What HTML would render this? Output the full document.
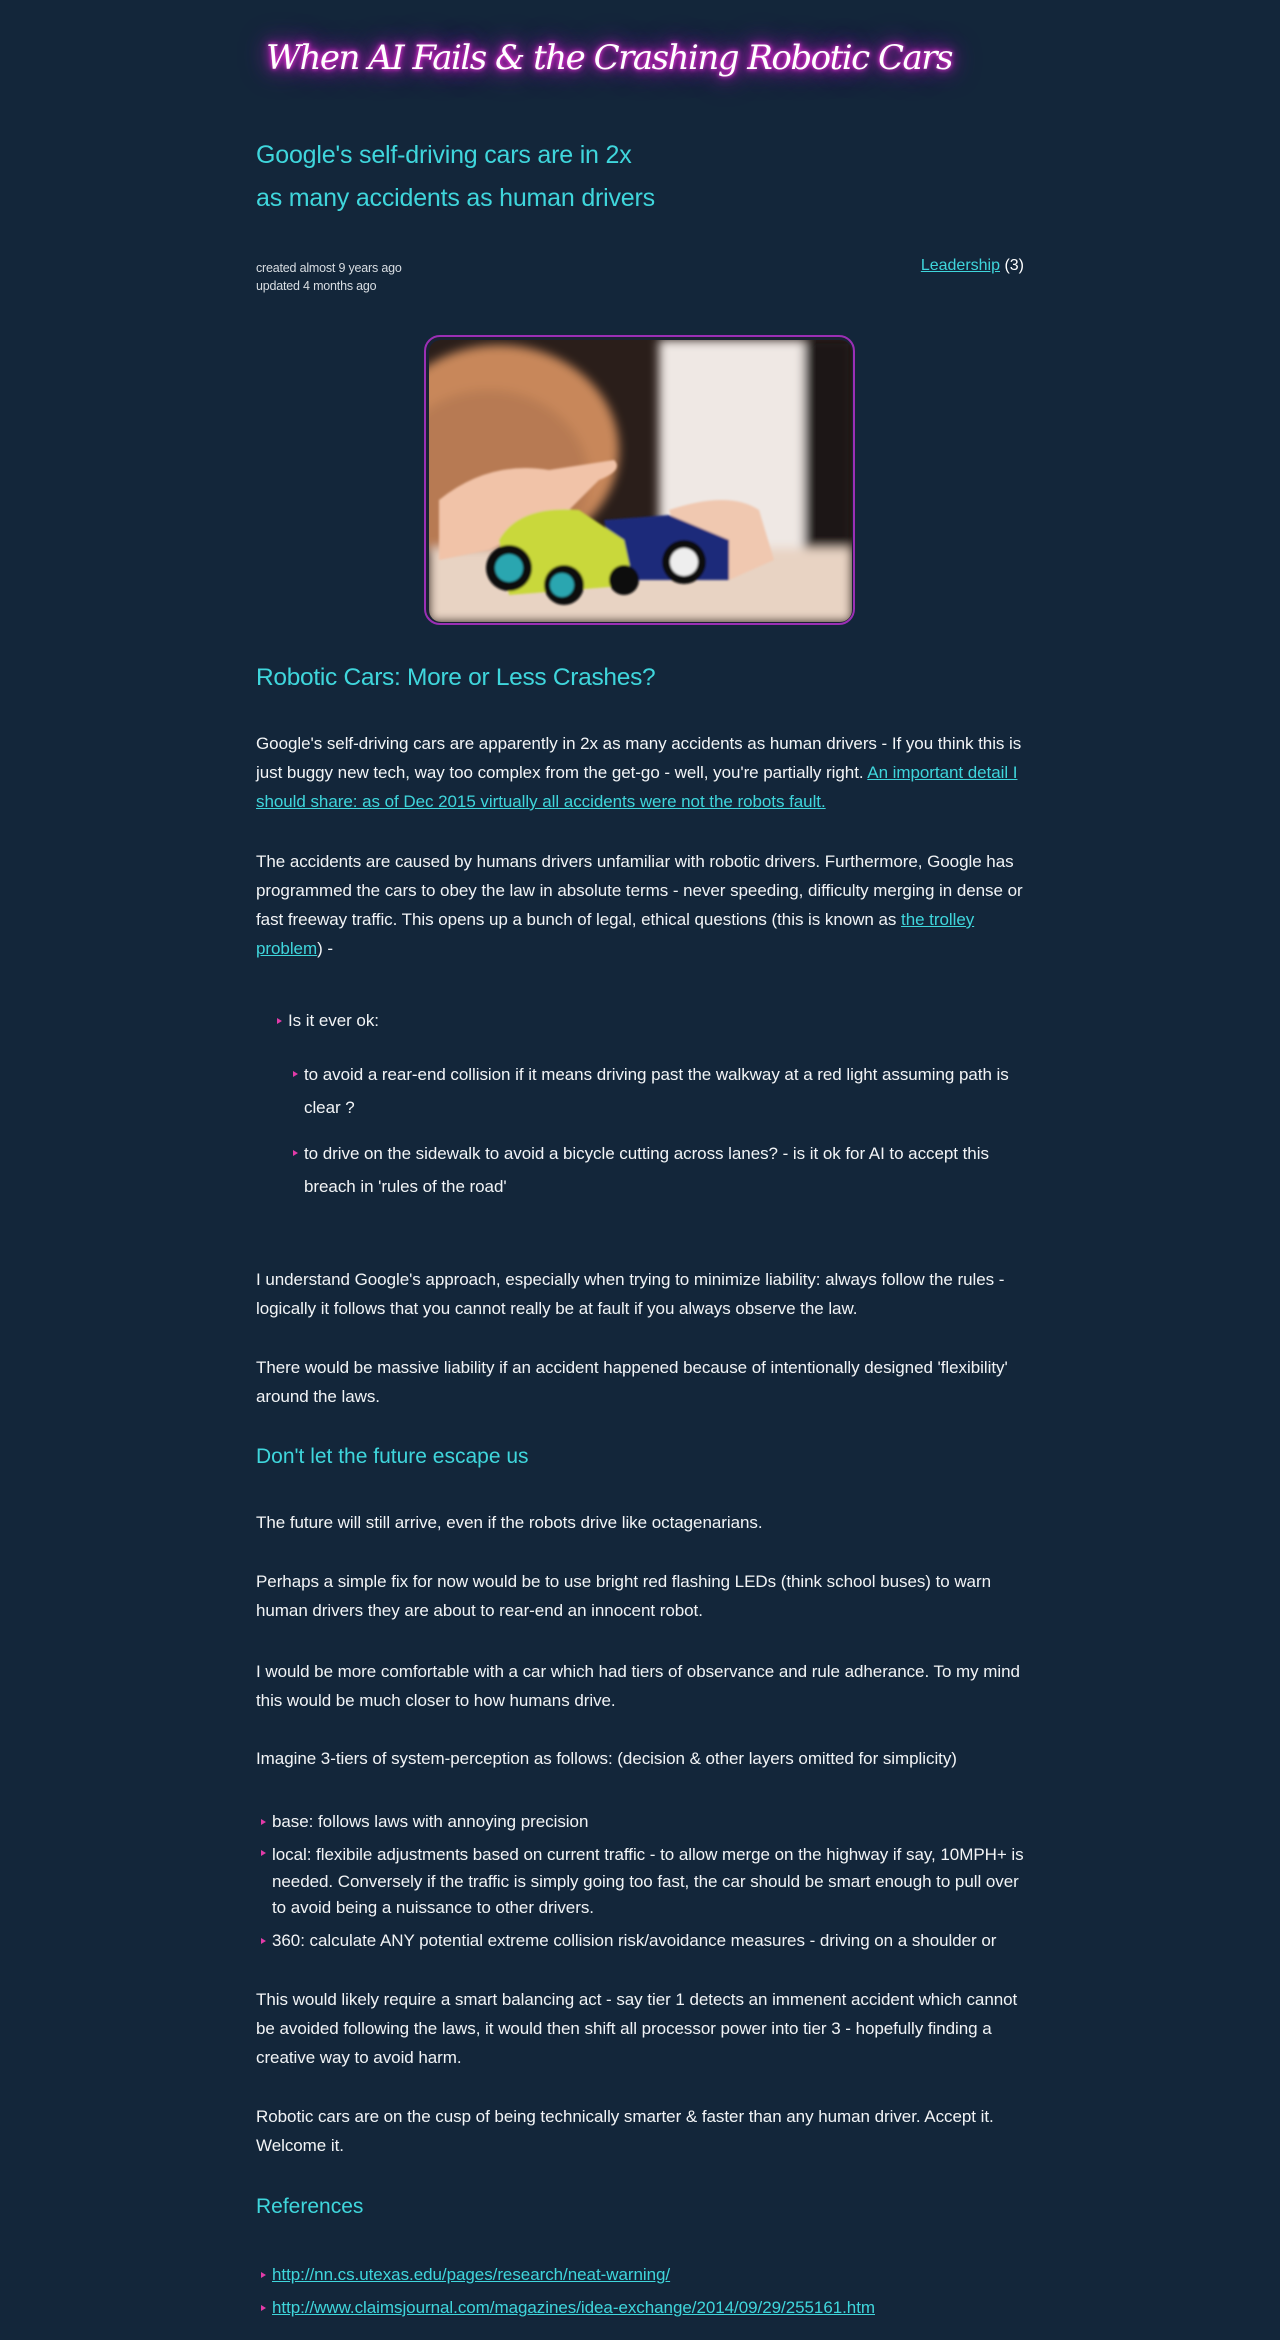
<!DOCTYPE html>
<html><head><meta charset="utf-8"><style>
*{margin:0;padding:0;box-sizing:border-box}
html,body{width:1280px;height:2340px;background:#13263a;overflow:hidden}
body{position:relative;font-family:"Liberation Sans",sans-serif;color:#f2f4f6}
.a{position:absolute;left:256px;width:768px}
p.a{font-size:17px;line-height:29px;letter-spacing:-0.05px}
a{color:#3fd6dc;text-decoration:underline}
.cy{color:#3fd6dc}
.b{position:absolute;font-size:17px;letter-spacing:-0.05px;line-height:22px}
.b:before{content:"";position:absolute;left:-11px;top:8px;border-left:5px solid #e23ba8;border-top:3px solid transparent;border-bottom:3px solid transparent}
.b.t:before{top:13px}
</style></head><body>
<div style="position:absolute;left:266px;top:38px;width:720px;font-family:'DejaVu Serif',serif;font-style:italic;font-size:34px;color:#fff;text-shadow:0 0 4px #ff3ce6,0 0 10px #e11fd0,0 0 20px #b418c0,0 0 30px #8a1aa0;white-space:nowrap;letter-spacing:-1.5px">When AI Fails &amp; the Crashing Robotic Cars</div>
<div class="a cy" style="top:134px;font-size:25px;line-height:43px;letter-spacing:-0.2px">Google's self-driving cars are in 2x<br>as many accidents as human drivers</div>
<div class="a" style="top:259px;font-size:12.5px;line-height:18px;color:#d8dde2;letter-spacing:-0.2px">created almost 9 years ago<br>updated 4 months ago</div>
<div style="position:absolute;right:256px;top:257px;font-size:16px;color:#fff"><a href="#">Leadership</a> (3)</div>
<div style="position:absolute;left:424px;top:335px;width:431px;height:290px;border:2px solid #9b2fb5;border-radius:16px;background:#1a2233;padding:3px">
<svg width="423" height="282" style="display:block;border-radius:12px" viewBox="0 0 423 282">
<defs><filter id="bl"><feGaussianBlur stdDeviation="5"/></filter><filter id="bl2"><feGaussianBlur stdDeviation="1"/></filter></defs>
<rect width="423" height="282" fill="#2a1e1a"/>
<g filter="url(#bl)">
<rect x="230" y="0" width="145" height="230" fill="#efe8e4"/>
<rect x="375" y="0" width="48" height="230" fill="#1a1412"/>
<ellipse cx="70" cy="110" rx="120" ry="105" fill="#c8875a"/>
<ellipse cx="60" cy="140" rx="100" ry="90" fill="#b77a52"/>
<rect x="0" y="208" width="423" height="74" fill="#e8d3c3"/>
</g>
<g filter="url(#bl2)">
<path d="M10 160 Q60 120 120 130 L185 120 Q195 130 170 140 L140 170 L60 210 L10 220Z" fill="#f1c3a8"/>
<path d="M240 170 Q300 150 330 170 L345 220 L300 240 L250 200Z" fill="#f0c8b0"/>
<path d="M175 180 L240 175 L300 200 L300 240 L190 240Z" fill="#1e2a7a"/>
<circle cx="255" cy="222" r="22" fill="#111"/><circle cx="255" cy="222" r="14" fill="#eee"/>
<path d="M70 200 Q90 165 150 170 L195 200 L205 245 L80 255Z" fill="#c9d83a"/>
<circle cx="80" cy="228" r="23" fill="#111"/><circle cx="80" cy="228" r="14" fill="#2aa6b0"/>
<circle cx="135" cy="245" r="20" fill="#111"/><circle cx="133" cy="245" r="12" fill="#2aa6b0"/>
<circle cx="195" cy="240" r="15" fill="#111"/>
</g>
</svg></div>
<div class="a cy" style="top:664px;font-size:24.5px;letter-spacing:-0.3px">Robotic Cars: More or Less Crashes?</div>
<p class="a" style="top:729px">Google's self-driving cars are apparently in 2x as many accidents as human drivers - If you think this is just buggy new tech, way too complex from the get-go - well, you're partially right. <a href="#">An important detail I should share: as of Dec 2015 virtually all accidents were not the robots fault.</a></p>
<p class="a" style="top:847px">The accidents are caused by humans drivers unfamiliar with robotic drivers. Furthermore, Google has programmed the cars to obey the law in absolute terms - never speeding, difficulty merging in dense or fast freeway traffic. This opens up a bunch of legal, ethical questions (this is known as <a href="#">the trolley problem</a>) -</p>
<div class="b" style="left:288px;top:1010px">Is it ever ok:</div>
<div class="b t" style="left:304px;top:1058px;width:716px;line-height:33px">to avoid a rear-end collision if it means driving past the walkway at a red light assuming path is clear ?</div>
<div class="b t" style="left:304px;top:1137px;width:716px;line-height:33px">to drive on the sidewalk to avoid a bicycle cutting across lanes? - is it ok for AI to accept this breach in 'rules of the road'</div>
<p class="a" style="top:1265px">I understand Google's approach, especially when trying to minimize liability: always follow the rules - logically it follows that you cannot really be at fault if you always observe the law.</p>
<p class="a" style="top:1353px">There would be massive liability if an accident happened because of intentionally designed 'flexibility' around the laws.</p>
<div class="a cy" style="top:1445px;font-size:21px">Don't let the future escape us</div>
<p class="a" style="top:1508px">The future will still arrive, even if the robots drive like octagenarians.</p>
<p class="a" style="top:1567px">Perhaps a simple fix for now would be to use bright red flashing LEDs (think school buses) to warn human drivers they are about to rear-end an innocent robot.</p>
<p class="a" style="top:1657px">I would be more comfortable with a car which had tiers of observance and rule adherance. To my mind this would be much closer to how humans drive.</p>
<p class="a" style="top:1744px">Imagine 3-tiers of system-perception as follows: (decision &amp; other layers omitted for simplicity)</p>
<div class="b" style="left:272px;top:1811px">base: follows laws with annoying precision</div>
<div class="b" style="left:272px;top:1842px;width:752px;line-height:26.5px">local: flexibile adjustments based on current traffic - to allow merge on the highway if say, 10MPH+ is needed. Conversely if the traffic is simply going too fast, the car should be smart enough to pull over to avoid being a nuissance to other drivers.</div>
<div class="b" style="left:272px;top:1930px">360: calculate ANY potential extreme collision risk/avoidance measures - driving on a shoulder or</div>
<p class="a" style="top:1985px">This would likely require a smart balancing act - say tier 1 detects an immenent accident which cannot be avoided following the laws, it would then shift all processor power into tier 3 - hopefully finding a creative way to avoid harm.</p>
<p class="a" style="top:2102px">Robotic cars are on the cusp of being technically smarter &amp; faster than any human driver. Accept it. Welcome it.</p>
<div class="a cy" style="top:2195px;font-size:21px">References</div>
<div class="b" style="left:272px;top:2264px"><a href="#">http://nn.cs.utexas.edu/pages/research/neat-warning/</a></div>
<div class="b" style="left:272px;top:2297px"><a href="#">http://www.claimsjournal.com/magazines/idea-exchange/2014/09/29/255161.htm</a></div>
</body></html>
